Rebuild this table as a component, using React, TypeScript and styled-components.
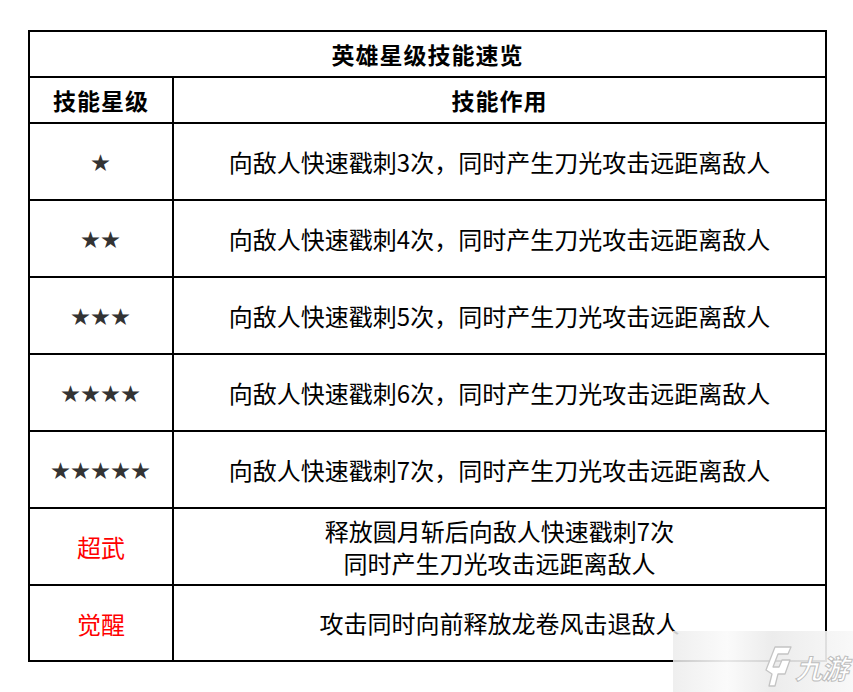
import { createGlobalStyle, styled } from "styled-components";

const GlobalStyle = createGlobalStyle`
    html, body {
        margin: 0;
        padding: 0;
        background: #ffffff;
    }
    body {
        font-family: "Noto Sans CJK SC", "Noto Sans", sans-serif;
    }
`;

const Page = styled.div`
    position: relative;
    width: 853px;
    height: 692px;
    padding: 30px 0 0 28px;
    box-sizing: border-box;
    overflow: hidden;
`;

const Table = styled.div`
    display: grid;
    grid-template-columns: 144px 653px;
    width: 799px;
    border-left: 2px solid #000;
    border-top: 2px solid #000;
    box-sizing: border-box;
`;

const Cell = styled.div<{ $height: number; $span?: boolean }>`
    grid-column: ${(p) => (p.$span ? "1 / span 2" : "auto")};
    height: ${(p) => p.$height}px;
    border-right: 2px solid #000;
    border-bottom: 2px solid #000;
    box-sizing: border-box;
    display: flex;
    align-items: center;
    justify-content: center;
    text-align: center;
`;

const Heading = styled.span`
    font-size: 23px;
    font-weight: 700;
    color: #000;
    letter-spacing: 1px;
`;

const Stars = styled.span`
    font-size: 19px;
    color: #333;
    letter-spacing: 1px;
`;

const Level = styled.span`
    font-size: 24px;
    color: #ff0000;
`;

const Effect = styled.span`
    font-size: 24px;
    line-height: 32px;
    color: #000;
`;

const Watermark = styled.div`
    position: absolute;
    right: 0;
    bottom: 0;
    width: 180px;
    height: 61px;
    display: flex;
    align-items: center;
    gap: 6px;
    padding-left: 91px;
    box-sizing: border-box;
    white-space: nowrap;
    background: linear-gradient(
        90deg,
        rgba(236, 236, 236, 0.85) 0%,
        rgba(250, 250, 250, 0.92) 30%,
        rgba(234, 234, 234, 0.9) 55%,
        rgba(248, 248, 248, 0.92) 100%
    );
`;

const BrandText = styled.span`
    font-family: "Noto Sans CJK SC", sans-serif;
    font-size: 27px;
    font-weight: 700;
    color: #ffffff;
    -webkit-text-stroke: 1px #bdbdbd;
    transform: skewX(-14deg);
    margin-top: 12px;
    letter-spacing: -1px;
`;

const rows = [
    { level: "★", text: "向敌人快速戳刺3次，同时产生刀光攻击远距离敌人" },
    { level: "★★", text: "向敌人快速戳刺4次，同时产生刀光攻击远距离敌人" },
    { level: "★★★", text: "向敌人快速戳刺5次，同时产生刀光攻击远距离敌人" },
    { level: "★★★★", text: "向敌人快速戳刺6次，同时产生刀光攻击远距离敌人" },
    { level: "★★★★★", text: "向敌人快速戳刺7次，同时产生刀光攻击远距离敌人" },
];

function Logo() {
    return (
        <svg width="28" height="42" viewBox="0 0 28 42" style={{ marginTop: 10 }}>
            <path
                d="M11 1 L27 1 L24 8 L14 8 L9 21 L15 21 L18 14 L26 14 L21 28 L14 28 L11 40 L5 40 L8 28 L2 24 Z"
                fill="#ffffff"
                stroke="#c4c4c4"
                strokeWidth="1.3"
                strokeLinejoin="round"
            />
        </svg>
    );
}

export default function App() {
    return (
        <>
            <GlobalStyle />
            <Page>
                <Table>
                    <Cell $height={46} $span>
                        <Heading>英雄星级技能速览</Heading>
                    </Cell>
                    <Cell $height={46}>
                        <Heading>技能星级</Heading>
                    </Cell>
                    <Cell $height={46}>
                        <Heading>技能作用</Heading>
                    </Cell>
                    {rows.map((r) => (
                        <>
                            <Cell $height={77}>
                                <Stars>{r.level}</Stars>
                            </Cell>
                            <Cell $height={77}>
                                <Effect>{r.text}</Effect>
                            </Cell>
                        </>
                    ))}
                    <Cell $height={77}>
                        <Level>超武</Level>
                    </Cell>
                    <Cell $height={77}>
                        <Effect>
                            释放圆月斩后向敌人快速戳刺7次
                            <br />
                            同时产生刀光攻击远距离敌人
                        </Effect>
                    </Cell>
                    <Cell $height={76}>
                        <Level>觉醒</Level>
                    </Cell>
                    <Cell $height={76}>
                        <Effect>攻击同时向前释放龙卷风击退敌人</Effect>
                    </Cell>
                </Table>
                <Watermark>
                    <Logo />
                    <BrandText>九游</BrandText>
                </Watermark>
            </Page>
        </>
    );
}
